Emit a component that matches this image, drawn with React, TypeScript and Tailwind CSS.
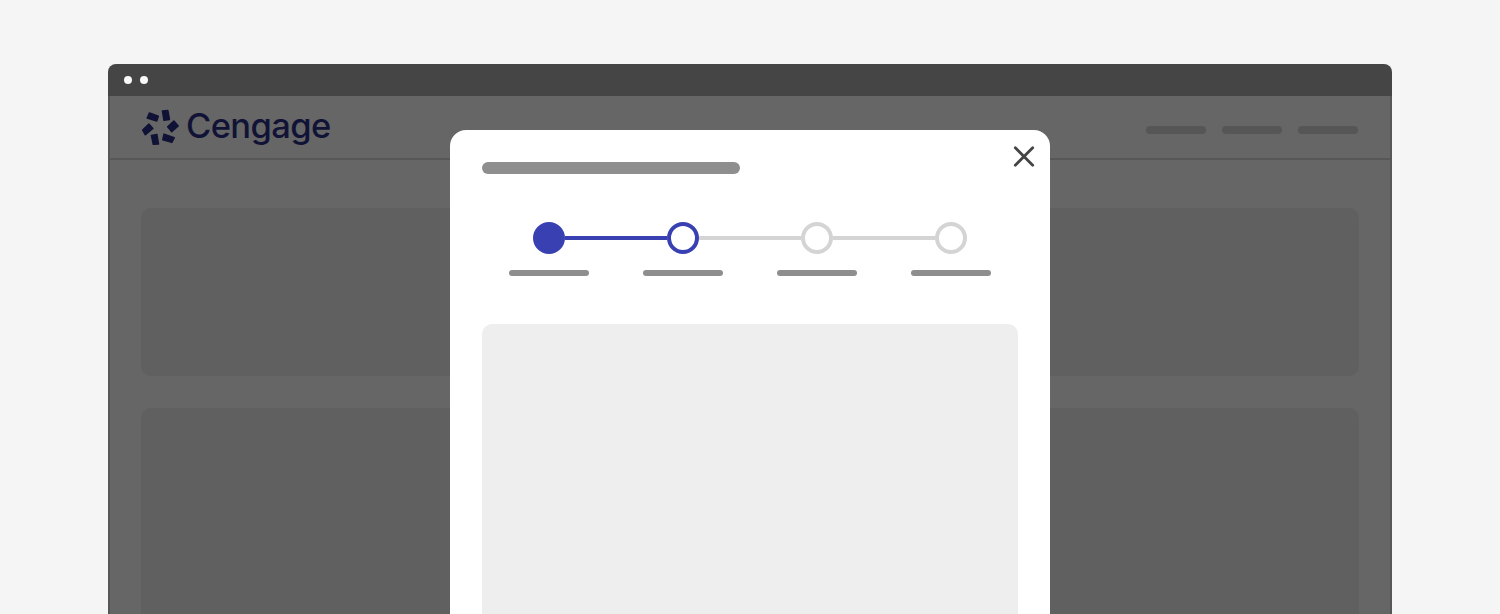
import React from "react";

function Logo() {
  return (
    <div className="flex items-center text-[#111336]">
      <svg width="38" height="38" viewBox="0 0 38 38" fill="currentColor" stroke="currentColor" strokeWidth="1.5" strokeLinejoin="round" aria-hidden="true">
        <path d="M20.4 2.9L25.8 2.4L27.5 11.4L22 12.3Z" />
        <path d="M31.9 13L36.2 18L29.7 23.8L25.7 18.9Z" />
        <path d="M22 26.1L32.2 29.8L29.8 34.4L20.8 31.7Z" />
        <path d="M9.4 27.4L14.9 26.4L16.5 36L11.3 36.3Z" />
        <path d="M6.9 16.1L10.9 20.4L3.4 26.8L0.7 22.1Z" />
        <path d="M7.5 4.9L16.3 8.2L14.7 13L5.2 10Z" />
      </svg>
      <span className="-mt-[3px] ml-1.5 font-['Inter',sans-serif] text-[34.5px] leading-[38px] font-medium tracking-[-0.6px]">Cengage</span>
    </div>
  );
}

const steps = [
  { circle: "bg-[#3940b1] border-[#3940b1]", line: "bg-[#3940b1]" },
  { circle: "bg-white border-[#3940b1]", line: "bg-[#d4d4d4]" },
  { circle: "bg-white border-[#d4d4d4]", line: "bg-[#d4d4d4]" },
  { circle: "bg-white border-[#d4d4d4]", line: "" },
];

function Stepper() {
  return (
    <div className="mt-12 px-[27px]">
      <div className="flex items-center px-6">
        {steps.map((s, i) => (
          <React.Fragment key={i}>
            <div className={`size-8 shrink-0 rounded-full border-4 ${s.circle}`} />
            {s.line && <div className={`h-1 flex-1 ${s.line}`} />}
          </React.Fragment>
        ))}
      </div>
      <div className="mt-4 flex justify-between">
        {steps.map((_, i) => (
          <div key={i} className="h-1.5 w-20 rounded-full bg-[#8e8e8e]" />
        ))}
      </div>
    </div>
  );
}

function Modal() {
  return (
    <div role="dialog" className="absolute top-[130px] left-[450px] flex h-[484px] w-[600px] flex-col rounded-t-2xl bg-white px-8 pt-8">
      <button aria-label="Close" className="absolute top-4 right-4 size-5">
        <svg width="20" height="20" viewBox="0 0 20 20" className="overflow-visible" fill="none" stroke="#444444" strokeWidth="2.8" strokeLinecap="round">
          <path d="M1.3 1.8L18.7 19.2M18.7 1.8L1.3 19.2" />
        </svg>
      </button>
      <div className="h-3 w-[258px] rounded-full bg-[#8e8e8e]" />
      <Stepper />
      <div className="mt-12 flex-1 rounded-t-[10px] bg-[#eeeeee]" />
    </div>
  );
}

export default function App() {
  return (
    <div className="relative h-[614px] w-[1500px] overflow-hidden bg-[#f5f5f5] px-[108px] pt-16">
      <div className="flex h-[550px] flex-col">
        <div className="flex h-8 shrink-0 items-center gap-2 rounded-t-lg bg-[#454545] px-4">
          <span className="size-2 rounded-full bg-[#f9f9f9]" />
          <span className="size-2 rounded-full bg-[#f9f9f9]" />
        </div>
        <div className="flex flex-1 flex-col border-x-2 border-[#575757] bg-[#666666]">
          <header className="flex h-16 shrink-0 items-center justify-between border-b-2 border-[#575757] px-8">
            <Logo />
            <nav className="mt-1.5 flex gap-4">
              <span className="h-2 w-[60px] rounded-full bg-[#565656]" />
              <span className="h-2 w-[60px] rounded-full bg-[#565656]" />
              <span className="h-2 w-[60px] rounded-full bg-[#565656]" />
            </nav>
          </header>
          <main className="flex flex-1 flex-col gap-8 px-[31px] pt-12">
            <div className="h-[168px] rounded-[10px] bg-[#606060]" />
            <div className="flex-1 rounded-t-[10px] bg-[#606060]" />
          </main>
        </div>
      </div>
      <Modal />
    </div>
  );
}
